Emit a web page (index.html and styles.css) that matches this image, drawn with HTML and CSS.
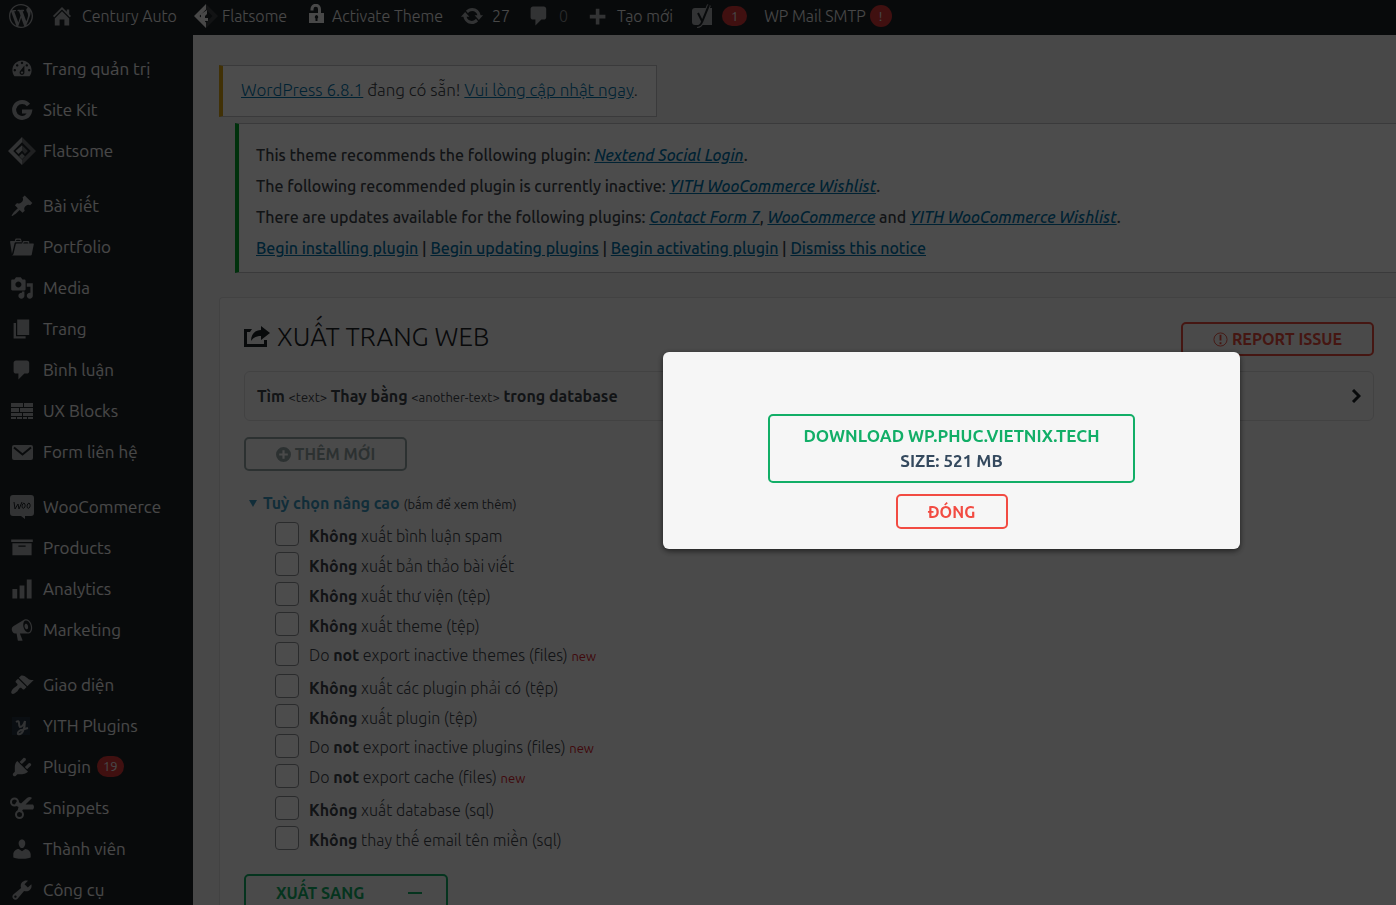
FILE: index.html
```html
<!DOCTYPE html>
<html lang="vi">
<head>
<meta charset="utf-8">
<title>Xuất trang web</title>
<link rel="stylesheet" href="styles.css">
</head>
<body>
<svg class="sprite" aria-hidden="true">
  <symbol id="comment" viewBox="0 0 20 20"><path d="M5 2h9c1.100 0 2 .9 2 2v7c0 1.100-.9 2-2 2h-2l-5 5v-5H5c-1.100 0-2-.9-2-2V4c0-1.100.9-2 2-2z"/></symbol>
  <symbol id="flatsome" viewBox="0 0 24 24"><path d="M12 0v4.500L4.500 12 12 19.500V24L0 12z"/><path opacity=".55" d="M12 0l12 12-12 12v-4.500l7.500-7.500L12 4.500z"/><path d="M12 7v4.500l-3 3L6.500 12z"/><path opacity=".55" d="M12 7l5 5-2.500 2.500-2.500-3z"/><path opacity=".8" d="M12 14l2.500 2.500-2.500 2.500-2.500-2.500z"/></symbol>
</svg>

<header class="adminbar">
  <a class="bar-item" href="#" aria-label="WordPress"><svg class="icon" viewBox="0 0 20 20"><path d="M20 10c0-5.510-4.490-10-10-10C4.480 0 0 4.490 0 10c0 5.520 4.480 10 10 10 5.510 0 10-4.480 10-10zM7.780 15.370L4.370 6.220c.55-.02 1.170-.08 1.170-.08.5-.06.44-1.130-.06-1.110 0 0-1.450.11-2.370.11-.18 0-.37 0-.58-.01C4.120 2.690 6.870 1.110 10 1.110c2.330 0 4.450.87 6.050 2.340-.68-.11-1.650.39-1.650 1.580 0 .74.45 1.360.9 2.100.35.61.55 1.360.55 2.460 0 1.490-1.400 5-1.400 5l-3.030-8.370c.54-.02.82-.17.82-.17.5-.05.44-1.250-.06-1.220 0 0-1.440.12-2.380.12-.87 0-2.330-.12-2.330-.12-.5-.03-.56 1.200-.06 1.220l.92.08 1.260 3.410zM17.410 10c.24-.64.74-1.870.43-4.250.7 1.290 1.050 2.710 1.050 4.250 0 3.290-1.730 6.240-4.400 7.780.97-2.590 1.940-5.200 2.920-7.780zM6.100 18.090C3.120 16.650 1.110 13.530 1.110 10c0-1.300.23-2.480.72-3.590C3.250 10.300 4.670 14.200 6.100 18.090zm4.030-6.630l2.580 6.980c-.86.29-1.760.45-2.710.45-.79 0-1.570-.11-2.290-.33.81-2.380 1.620-4.740 2.420-7.100z"/></svg></a>
  <a class="bar-item" href="#"><svg class="icon" viewBox="0 0 20 20"><path d="M16 8.500l1.530 1.530-1.060 1.060L10 4.600l-6.470 6.490-1.060-1.060L10 2.500l4 4v-2h2v4zm-6-2.460l6 5.990V18h-4v-5H8v5H4v-5.970z"/></svg><span>Century Auto</span></a>
  <a class="bar-item tight bright" href="#"><svg class="icon" viewBox="0 0 24 24"><path d="M12 0v5.500L5.500 12 12 18.500V24L0 12z"/><path opacity=".15" d="M12 0l12 12-12 12v-5.500l6.500-6.500L12 5.500z"/><path d="M13 6v4l-2 2v2h3v3h-3v2l-4-4v-5z"/></svg><span>Flatsome</span></a>
  <a class="bar-item tight bright" href="#"><svg class="icon" viewBox="0 0 24 24"><path d="M5 9h9V5a2 2 0 0 0-4.500 0v1.500H6.500V5a5 5 0 0 1 10.500 0v4h3v10H5z"/><path class="hole" d="M12.500 11a2 2 0 0 1 1 3.500V17h-2v-2.500a2 2 0 0 1 1-3.500z"/></svg><span>Activate Theme</span></a>
  <a class="bar-item" href="#"><svg class="icon" viewBox="0 0 20 20"><path d="M10.200 3.280c3.530 0 6.430 2.610 6.920 6h2.080l-3.500 4-3.500-4h2.320c-.45-1.970-2.210-3.450-4.320-3.450-1.450 0-2.730.71-3.540 1.780L4.950 5.660C6.230 4.200 8.110 3.280 10.200 3.280zm-.4 13.440c-3.520 0-6.430-2.610-6.920-6H.8l3.500-4 3.500 4H5.480c.45 1.970 2.210 3.450 4.320 3.450 1.450 0 2.730-.71 3.540-1.780l1.710 1.950c-1.280 1.460-3.150 2.380-5.250 2.380z"/></svg><span>27</span></a>
  <a class="bar-item" href="#"><svg class="icon"><use href="#comment"/></svg><span class="dim">0</span></a>
  <a class="bar-item" href="#"><svg class="icon" viewBox="0 0 20 20"><path d="M17 9v3h-5v5H9v-5H4V9h5V4h3v5z"/></svg><span>Tạo mới</span></a>
  <a class="bar-item" href="#" aria-label="Yoast SEO"><svg class="icon" viewBox="0 0 24 24"><path d="M5 4h14v17H5a3 3 0 0 1-3-3V7a3 3 0 0 1 3-3z"/><path d="M19 4h3v17H11z"/><path class="stroke-light wide" d="M19 1l-7 17q-1.500 4-5 4"/><path class="stroke-dark" d="M8 9l4 8M19 1l-7 17q-1.500 4-5 4"/></svg><span class="badge">1</span></a>
  <a class="bar-item tight" href="#"><span>WP Mail SMTP</span><span class="badge round">!</span></a>
</header>

<div class="layout">
  <nav class="sidebar">
    <ul>
      <li><a href="#"><svg class="icon" viewBox="0 0 20 20"><path d="M3.760 16h12.480c1.100-1.370 1.760-3.110 1.760-5 0-4.420-3.580-8-8-8s-8 3.580-8 8c0 1.890.66 3.630 1.760 5zM10 4c.55 0 1 .45 1 1s-.45 1-1 1-1-.45-1-1 .45-1 1-1zM6 6c.55 0 1 .45 1 1s-.45 1-1 1-1-.45-1-1 .45-1 1-1zm8 0c.55 0 1 .45 1 1s-.45 1-1 1-1-.45-1-1 .45-1 1-1zm-5.370 5.550L12 7v6c0 1.100-.9 2-2 2s-2-.9-2-2c0-.57.24-1.080.63-1.450zM4 10c.55 0 1 .45 1 1s-.45 1-1 1-1-.45-1-1 .45-1 1-1zm12 0c.55 0 1 .45 1 1s-.45 1-1 1-1-.45-1-1 .45-1 1-1zm-5 3c0-.55-.45-1-1-1s-1 .45-1 1 .45 1 1 1 1-.45 1-1z"/></svg>Trang quản trị</a></li>
      <li><a href="#"><svg class="icon" viewBox="0 0 24 24"><path class="ring" d="M18.500 7A8 8 0 1 0 20 13.500h-8"/></svg>Site Kit</a></li>
      <li><a href="#"><svg class="icon large"><use href="#flatsome"/></svg>Flatsome</a></li>
    </ul>
    <ul>
      <li><a href="#"><svg class="icon" viewBox="0 0 20 20"><path d="M10.440 3.020l1.820-1.820 6.360 6.350-1.830 1.820c-1.050-.68-2.480-.57-3.410.36l-.75.75c-.92.93-1.040 2.350-.35 3.410l-1.830 1.820-2.410-2.410-2.800 2.790c-.42.42-3.380 2.710-3.800 2.290s1.860-3.390 2.280-3.810l2.790-2.790L4.100 9.360l1.830-1.820c1.050.69 2.480.57 3.400-.36l.75-.75c.93-.92 1.050-2.350.36-3.410z"/></svg>Bài viết</a></li>
      <li><a href="#"><svg class="icon" viewBox="0 0 20 20"><path d="M4 5H.78c-.37 0-.74.32-.69.84l1.560 9.990S3.500 8.470 3.860 6.700c.11-.53.61-.7.98-.7H10s-.7-2.080-.77-2.310C9.110 3.250 8.890 3 8.450 3H5.140c-.36 0-.7.23-.8.64C4.250 4.040 4 5 4 5zm4.880 0h-4s.42-1 .87-1h2.130c.48 0 1 1 1 1zM2.670 16.250c-.31.47-.76.75-1.260.75h15.730c.54 0 .92-.31 1.030-.83.44-2.190 1.680-8.440 1.680-8.440.07-.5-.3-.73-.62-.73H16V5.530c0-.16-.26-.53-.66-.53h-3.760c-.52 0-.87.58-.87.58L10 7H5.590c-.32 0-.63.19-.69.5 0 0-1.590 6.700-1.720 7.330-.07.37-.22.99-.51 1.420zM15.380 7H11s.58-1 1.130-1h2.290c.71 0 .96 1 .96 1z"/></svg>Portfolio</a></li>
      <li><a href="#"><svg class="icon" viewBox="0 0 20 20"><path d="M13 11V4c0-.55-.45-1-1-1h-1.670L9 1H5L3.670 3H2c-.55 0-1 .45-1 1v7c0 .55.45 1 1 1h10c.55 0 1-.45 1-1zM7 4.500c1.380 0 2.500 1.120 2.500 2.500S8.380 9.500 7 9.500 4.500 8.380 4.500 7 5.620 4.500 7 4.500zM14 6h5v10.500c0 1.380-1.120 2.500-2.500 2.500S14 17.880 14 16.500s1.120-2.500 2.500-2.500c.17 0 .34.02.5.05V9h-3V6zm-4 8.050V13h2v3.500c0 1.380-1.120 2.500-2.500 2.500S7 17.880 7 16.500 8.120 14 9.500 14c.17 0 .34.02.5.05z"/></svg>Media</a></li>
      <li><a href="#"><svg class="icon" viewBox="0 0 20 20"><path d="M6 15V2h10v13H6zm-1 1h8v2H3V5h2v11z"/></svg>Trang</a></li>
      <li><a href="#"><svg class="icon"><use href="#comment"/></svg>Bình luận</a></li>
      <li><a href="#"><svg class="icon" viewBox="0 0 24 24"><path d="M1 4h12v4H1zM14 4h9v4h-9zM1 9h8v4H1zM10 9h13v4H10zM1 14h11v3H1zM13 14h10v3H13zM1 18h5v2H1zM7 18h5v2H7zM13 18h4v2h-4zM18 18h5v2h-5z"/></svg>UX Blocks</a></li>
      <li><a href="#"><svg class="icon" viewBox="0 0 24 24"><path d="M4 5h17a2 2 0 0 1 2 2v11a2 2 0 0 1-2 2H4a2 2 0 0 1-2-2V7a2 2 0 0 1 2-2z"/><path class="stroke-dark" d="M4 7.500l8.500 7 8.500-7"/></svg>Form liên hệ</a></li>
    </ul>
    <ul>
      <li><a href="#"><svg class="icon" viewBox="0 0 24 24"><path d="M3 0h18a3 3 0 0 1 3 3v15a3 3 0 0 1-3 3h-6v3l-4-3H3a3 3 0 0 1-3-3V3a3 3 0 0 1 3-3z"/><path class="script" d="M4 7l1 7 3-5 1 5 3-7M14 8c-3 1-2 7 0 5 1.500-1 1.500-4 0-5zM19 8c-3 1-2 7 0 5 1.500-1 1.500-4 0-5z"/></svg>WooCommerce</a></li>
      <li><a href="#"><svg class="icon" viewBox="0 0 20 20"><path d="M19 3v2H1V3h18zM2 6h16v10H2V6zm11 3V8H7v1h6z"/></svg>Products</a></li>
      <li><a href="#"><svg class="icon" viewBox="0 0 20 20"><path d="M18 18V2h-4v16h4zm-6 0V7H8v11h4zm-6 0v-8H2v8h4z"/></svg>Analytics</a></li>
      <li><a href="#"><svg class="icon" viewBox="0 0 20 20"><path d="M18.150 5.940c.46 1.620.38 3.220-.02 4.480-.42 1.280-1.260 2.180-2.300 2.480-.16.06-.26.06-.4.06-.06.02-.12.02-.18.02-.06.02-.14.02-.22.02h-6.800l2.220 5.500c.02.14-.06.26-.14.34-.08.1-.24.16-.34.16H6.950c-.1 0-.26-.06-.34-.16-.08-.08-.16-.2-.14-.34l-1-5.500H4.250l-.02-.02c-.5.06-1.080-.18-1.540-.62s-.88-1.080-1.060-1.880c-.24-.8-.2-1.560-.02-2.200.18-.62.58-1.080 1.060-1.300l.02-.02 9-5.400c.1-.06.18-.1.24-.16.06-.04.14-.08.24-.12.16-.08.28-.12.5-.18 1.040-.3 2.240.1 3.220.98s1.840 2.240 2.260 3.860zm-2.580 5.980h-.02c.4-.1.74-.34 1.040-.7.58-.7.86-1.760.86-3.040 0-.64-.1-1.300-.28-1.980-.34-1.360-1.020-2.500-1.780-3.240s-1.680-1.100-2.460-.88c-.82.22-1.400.96-1.700 2-.32 1.040-.28 2.360.06 3.720.38 1.360 1 2.500 1.800 3.240.78.74 1.620 1.100 2.480.88zm-2.540-7.080c.22-.04.42-.02.62.04.38.16.76.48 1.020 1s.42 1.200.42 1.780c0 .3-.04.56-.12.8-.18.48-.44.84-.86.94-.34.1-.8-.06-1.140-.4s-.64-.86-.78-1.500c-.18-.62-.12-1.240.02-1.720s.48-.84.82-.94z"/></svg>Marketing</a></li>
    </ul>
    <ul>
      <li><a href="#"><svg class="icon" viewBox="0 0 20 20"><path d="M14.480 11.060L7.410 3.990l1.500-1.500c.5-.56 2.300-.47 3.510.32 1.210.8 1.430 1.280 2.910 2.100 1.180.64 2.450 1.260 4.450.85zm-.71.71L6.700 4.700 4.930 6.470c-.39.39-.39 1.020 0 1.410l1.060 1.060c.39.39.39 1.030 0 1.420-.6.6-1.430 1.110-2.210 1.690-.35.26-.7.53-1.010.84C1.430 14.230.4 16.080 1.400 17.070c.99 1 2.840-.03 4.180-1.360.31-.31.58-.66.85-1.020.57-.78 1.080-1.610 1.690-2.210.39-.39 1.020-.39 1.410 0l1.060 1.060c.39.39 1.020.39 1.410 0z"/></svg>Giao diện</a></li>
      <li><a href="#"><svg class="icon" viewBox="0 0 24 24"><path class="tile" d="M2 3h18v18H2z"/><path class="pen" d="M6 8q3-2 3 1t1 4q3 0 5-6M15 7q0 6-2 10t-5 3q-1-2 3-4l7-2"/></svg>YITH Plugins</a></li>
      <li><a href="#"><svg class="icon" viewBox="0 0 20 20"><path d="M13.110 4.360L9.870 7.600 8 5.730l3.240-3.240c.35-.34 1.050-.2 1.560.32.52.51.66 1.210.31 1.550zm-8 1.770l.91-1.120 9.010 9.010-1.190.84c-.71.71-2.630 1.160-3.820 1.160H6.140L4.900 17.260c-.59.59-1.540.59-2.120 0-.59-.58-.59-1.530 0-2.120l1.240-1.240v-3.880c0-1.130.4-3.190 1.090-3.890zm7.260 3.970l3.240-3.240c.34-.35 1.040-.21 1.550.31.52.51.66 1.210.31 1.550l-3.240 3.250z"/></svg><span class="with-count">Plugin <span class="badge count">19</span></span></a></li>
      <li><a href="#"><svg class="icon" viewBox="0 0 24 24"><g class="loops"><circle cx="4.500" cy="6" r="3.500"/><circle cx="9.500" cy="18.500" r="3.500"/></g><path d="M7 5l4 2.500L17 2q3-2 5 0l-6.500 6.500H23q2 2.500 0 5H13l-2 3-3.500-1.500 1-4-4-2z"/></svg>Snippets</a></li>
      <li><a href="#"><svg class="icon" viewBox="0 0 20 20"><path d="M10 9.250c-2.270 0-2.730-3.440-2.730-3.440C7 4.020 7.820 2 9.970 2c2.160 0 2.980 2.020 2.710 3.810 0 0-.41 3.440-2.680 3.440zm0 2.570L12.720 10c2.390 0 4.520 2.330 4.520 4.530v2.490s-3.650 1.130-7.240 1.130c-3.650 0-7.240-1.130-7.240-1.130v-2.490c0-2.250 1.940-4.480 4.470-4.480z"/></svg>Thành viên</a></li>
      <li><a href="#"><svg class="icon" viewBox="0 0 20 20"><path d="M16.680 9.770c-1.340 1.340-3.300 1.670-4.950.99l-5.410 6.520c-.99.99-2.590.99-3.580 0s-.99-2.590 0-3.570l6.520-5.420c-.68-1.650-.35-3.610.99-4.950 1.280-1.280 3.120-1.620 4.720-1.060l-2.890 2.890 2.820 2.820 2.860-2.870c.53 1.580.18 3.390-1.080 4.650zM3.810 16.210c.4.39 1.040.39 1.430 0 .4-.4.4-1.040 0-1.430-.39-.4-1.030-.4-1.430 0-.39.39-.39 1.030 0 1.430z"/></svg>Công cụ</a></li>
    </ul>
  </nav>

  <main class="content">
    <p class="update-nag"><a href="#">WordPress 6.8.1</a> đang có sẵn! <a href="#">Vui lòng cập nhật ngay</a>.</p>

    <section class="notice">
      <p>This theme recommends the following plugin: <a href="#"><em>Nextend Social Login</em></a>.</p>
      <p>The following recommended plugin is currently inactive: <a href="#"><em>YITH WooCommerce Wishlist</em></a>.</p>
      <p>There are updates available for the following plugins: <a href="#"><em>Contact Form 7</em></a>, <a href="#"><em>WooCommerce</em></a> and <a href="#"><em>YITH WooCommerce Wishlist</em></a>.</p>
      <p><a href="#">Begin installing plugin</a> | <a href="#">Begin updating plugins</a> | <a href="#">Begin activating plugin</a> | <a href="#">Dismiss this notice</a></p>
    </section>

    <section class="card">
      <div class="card-head">
        <h1><svg class="title-icon" viewBox="0 0 26 22"><path d="M8 3H0v18h23v-7h-3v4H3V6h3zM17 0l9 7-9 7v-4c-4 0-7 1-10 5C7 8 11 4 17 4z"/></svg>XUẤT TRANG WEB</h1>
        <button class="btn red report" type="button"><svg viewBox="0 0 16 16" class="btn-icon"><circle class="outline" cx="8" cy="8" r="7"/><path d="M7 3h2v6H7zM7 11h2v2H7z"/></svg>REPORT ISSUE</button>
      </div>

      <button class="find-row" type="button">
        <span><b>Tìm</b> <small>&lt;text&gt;</small> <b>Thay bằng</b> <small>&lt;another-text&gt;</small> <b>trong database</b></span>
        <svg class="chevron" viewBox="0 0 10 14"><path d="M2 1l6 6-6 6"/></svg>
      </button>

      <button class="btn grey add" type="button"><svg viewBox="0 0 14 14" class="btn-icon"><path fill-rule="evenodd" d="M7 0a7 7 0 1 1 0 14A7 7 0 0 1 7 0zM6 3v3H3v2h3v3h2V8h3V6H8V3z"/></svg>THÊM MỚI</button>

      <h2 class="advanced"><svg class="caret" viewBox="0 0 8 7"><path d="M0 0h8L4 7z"/></svg><span>Tuỳ chọn nâng cao <small>(bấm để xem thêm)</small></span></h2>

      <div class="options">
        <div class="group">
          <label><input type="checkbox"><span><b>Không</b> xuất bình luận spam</span></label>
          <label><input type="checkbox"><span><b>Không</b> xuất bản thảo bài viết</span></label>
          <label><input type="checkbox"><span><b>Không</b> xuất thư viện (tệp)</span></label>
          <label><input type="checkbox"><span><b>Không</b> xuất theme (tệp)</span></label>
          <label><input type="checkbox"><span>Do <b>not</b> export inactive themes (files) <small>new</small></span></label>
        </div>
        <div class="group">
          <label><input type="checkbox"><span><b>Không</b> xuất các plugin phải có (tệp)</span></label>
          <label><input type="checkbox"><span><b>Không</b> xuất plugin (tệp)</span></label>
          <label><input type="checkbox"><span>Do <b>not</b> export inactive plugins (files) <small>new</small></span></label>
          <label><input type="checkbox"><span>Do <b>not</b> export cache (files) <small>new</small></span></label>
        </div>
        <div class="group">
          <label><input type="checkbox"><span><b>Không</b> xuất database (sql)</span></label>
          <label><input type="checkbox"><span><b>Không</b> thay thế email tên miền (sql)</span></label>
        </div>
      </div>

      <button class="btn green export" type="button"><span>XUẤT SANG</span><i class="dash"></i></button>
    </section>
  </main>
</div>

<div class="overlay">
  <div class="modal" role="dialog" aria-label="Download">
    <a class="btn green download" href="#"><span>DOWNLOAD WP.PHUC.VIETNIX.TECH</span><span class="size">SIZE: 521 MB</span></a>
    <button class="btn red close" type="button">ĐÓNG</button>
  </div>
</div>
</body>
</html>
```
FILE: styles.css
```css
* { box-sizing: border-box; }
body {
  margin: 0;
  height: 100vh;
  display: flex;
  flex-direction: column;
  overflow: hidden;
  background: #f0f0f1;
  color: #3c434a;
  font-family: "Ubuntu", "Open Sans", "Noto Sans", sans-serif;
  font-size: 16px;
  font-weight: 300;
  line-height: 20px;
}
p, h1, h2, ul { margin: 0; padding: 0; }
button { font-family: inherit; cursor: pointer; }
b { font-weight: 600; }
a { color: #0073aa; }
.sprite { display: none; }
.icon { width: 24px; height: 24px; flex: none; fill: #a7aaad; }

.adminbar {
  flex: none;
  display: flex;
  align-items: center;
  gap: 17px;
  height: 35px;
  padding: 0 9px 4px;
  background: #1d2327;
  white-space: nowrap;
}
.bar-item {
  display: flex;
  align-items: center;
  gap: 8px;
  color: #f0f0f1;
  text-decoration: none;
}
.tight { gap: 4px; }
.bright .icon { fill: #f0f0f1; }
.hole { fill: #1d2327; }
.dim { color: #a7aaad; opacity: .8; }
.stroke-dark { fill: none; stroke: #1d2327; stroke-width: 2; }
.stroke-light { fill: none; stroke: #a7aaad; }
.wide { stroke-width: 4; }
.badge {
  min-width: 25px;
  padding: 0 8px;
  border-radius: 11px;
  background: #d63638;
  color: #f0f0f1;
  font-size: 13px;
  font-weight: 400;
  line-height: 20px;
  text-align: center;
}
.round { min-width: 22px; line-height: 22px; }

.layout { flex: 1; display: flex; min-height: 0; }
.sidebar {
  flex: none;
  width: 193px;
  padding-top: 13px;
  display: flex;
  flex-direction: column;
  gap: 14px;
  background: #1d2327;
  overflow: hidden;
}
.sidebar ul { list-style: none; }
.sidebar a {
  display: flex;
  align-items: center;
  gap: 9px;
  height: 41px;
  padding-left: 10px;
  color: #f0f0f1;
  font-size: 17px;
  font-weight: 400;
  text-decoration: none;
}
.icon.large { width: 28px; height: 28px; margin: 0 -2px; }
.ring { fill: none; stroke: #a7aaad; stroke-width: 4; }
.script { fill: none; stroke: #1d2327; stroke-width: 1; }
.tile { fill: #22303f; }
.pen { fill: none; stroke: #a7aaad; stroke-width: 2; }
.loops { fill: none; stroke: #a7aaad; stroke-width: 2; }
.with-count { display: flex; align-items: center; gap: 6px; }
.count { line-height: 21px; padding: 0 6px; }

.content {
  flex: 1;
  min-width: 0;
  display: flex;
  flex-direction: column;
  padding: 30px 0 0 26px;
  overflow: hidden;
}
.content > * { flex: none; }
.update-nag {
  align-self: flex-start;
  padding: 14px 18px 16px;
  border: 1px solid #c3c4c7;
  border-left: 4px solid #dba617;
  background: #fff;
  font-size: 17px;
}
.notice {
  margin: 6px 0 24px 16px;
  padding: 16px 17px 9px;
  display: flex;
  flex-direction: column;
  gap: 1px;
  border: 1px solid #c3c4c7;
  border-left: 4px solid #00a32a;
  border-right: 0;
  background: #fff;
  font-weight: 500;
  line-height: 30px;
}
.card {
  padding: 24px 22px 0 24px;
  border: 1px solid #dcdcde;
  border-right: 0;
  border-radius: 4px 0 0 0;
  background: #f9f9f9;
}
.card-head { display: flex; justify-content: space-between; }
h1 {
  display: flex;
  align-items: center;
  gap: 7px;
  height: 30px;
  color: #1d2327;
  font-weight: 300;
  font-size: 26px;
  line-height: 30px;
}
.title-icon { width: 26px; height: 22px; fill: #1d2327; }
.btn {
  display: flex;
  align-items: center;
  justify-content: center;
  gap: 4px;
  height: 34px;
  border: 2px solid;
  border-radius: 5px;
  background: none;
  font-size: 16px;
  font-weight: 600;
  text-decoration: none;
}
.btn-icon { width: 15px; height: 15px; fill: currentColor; }
.outline { fill: none; stroke: currentColor; stroke-width: 1; }
.red { border-color: #e74c3c; color: #e74c3c; }
.grey { border-color: #95a5a6; color: #95a5a6; }
.green { border-color: #12ae67; color: #12ae67; }
.report { width: 193px; }
.find-row {
  display: flex;
  align-items: center;
  justify-content: space-between;
  width: 100%;
  height: 50px;
  margin: 15px 0 16px;
  padding: 0 12px;
  border: 1px solid #dcdcde;
  border-radius: 6px;
  background: none;
  color: #3c434a;
  font-size: 16px;
}
small { font-size: 13px; font-weight: 400; }
.chevron { width: 10px; height: 14px; fill: none; stroke: #1d2327; stroke-width: 3; }
.add { width: 163px; }
.advanced {
  display: flex;
  align-items: center;
  gap: 6px;
  margin: 22px 0 5px 5px;
  color: #3b98bf;
  font-size: 16px;
  font-weight: 600;
  line-height: 20px;
}
.advanced small { color: #3c434a; }
.caret { width: 8px; height: 7px; fill: currentColor; }
.options { display: flex; flex-direction: column; gap: 2px; padding-left: 31px; }
.options label { display: flex; align-items: center; gap: 10px; height: 30px; }
.options span { padding-top: 3px; }
.options input {
  appearance: none;
  width: 24px;
  height: 24px;
  margin: 0;
  border: 1px solid #8c8f94;
  border-radius: 4px;
  background: #fff;
}
.options small { color: #d5202a; }
.export { width: 204px; height: 38px; margin-top: 21px; padding: 0 24px 0 30px; justify-content: space-between; }
.dash { width: 14px; height: 2px; background: currentColor; }

.overlay {
  position: fixed;
  inset: 0;
  display: flex;
  align-items: center;
  justify-content: center;
  padding: 0 0 4px 507px;
  background: rgba(0, 0, 0, .7);
}
.modal {
  width: 577px;
  padding: 62px 20px 20px;
  display: flex;
  flex-direction: column;
  align-items: center;
  gap: 11px;
  border-radius: 6px;
  background: #f6f6f6;
  box-shadow: 0 2px 6px rgba(0, 0, 0, .6);
}
.download { flex-direction: column; width: 367px; height: 69px; gap: 5px; font-size: 17px; }
.size { color: #34495e; }
.close { width: 112px; height: 35px; border-color: #f24b42; color: #f24b42; }
```
